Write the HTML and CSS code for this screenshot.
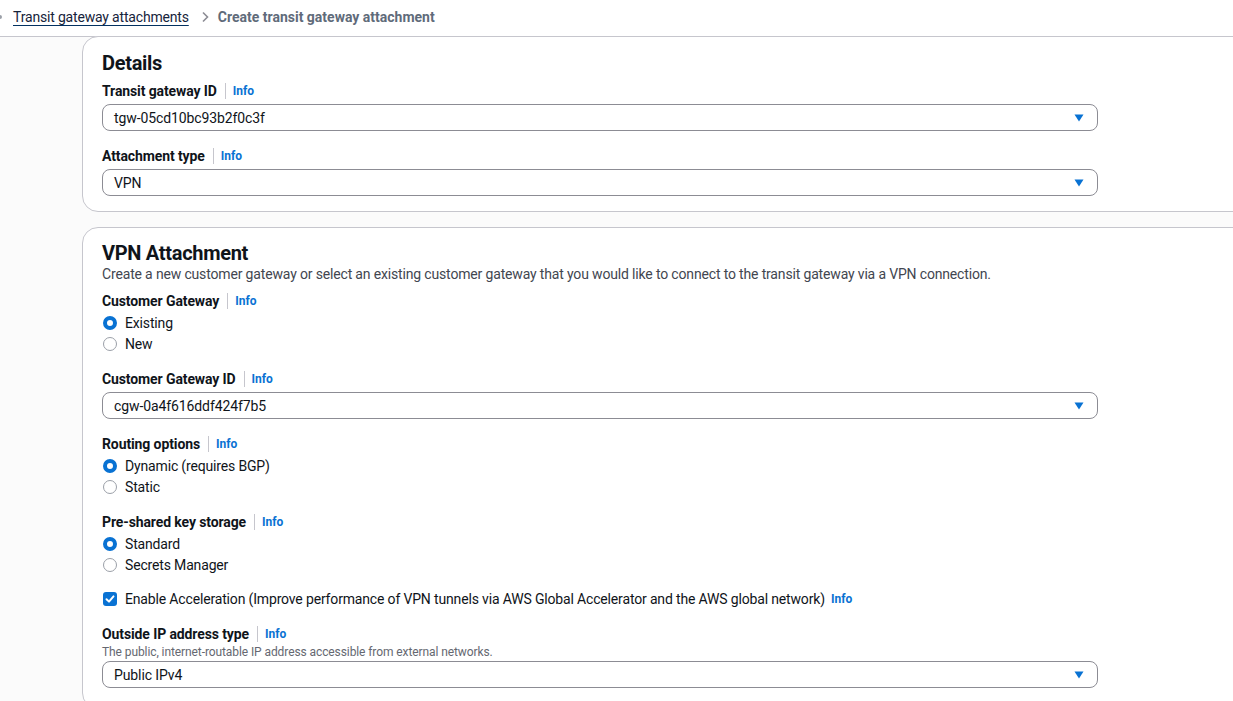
FILE: index.html
```html
<!DOCTYPE html>
<html>
<head>
<meta charset="utf-8">
<link rel="stylesheet" href="styles.css">
</head>
<body>
<div class="topbar">
  <nav class="crumbs">
    <span class="dot"></span>
    <a class="crumb-link" href="#">Transit gateway attachments</a>
    <svg class="chev" width="10" height="12" viewBox="0 0 10 12"><path d="M3 1.5 L7.5 6 L3 10.5" fill="none" stroke="#8c8c94" stroke-width="1.6"/></svg>
    <span class="crumb-current">Create transit gateway attachment</span>
  </nav>
</div>
<main class="content">
  <section class="card card-details">
    <h2 class="card-title">Details</h2>
    <div class="field field-top">
      <div class="label-row"><span class="label">Transit gateway ID</span><span class="sep"></span><a class="info" href="#">Info</a></div>
      <div class="select"><span>tgw-05cd10bc93b2f0c3f</span><svg class="caret" width="10" height="8" viewBox="0 0 10 8"><path d="M0.5 0.5 H9.5 L5 7.5 Z" fill="#0972d3"/></svg></div>
    </div>
    <div class="field">
      <div class="label-row"><span class="label">Attachment type</span><span class="sep"></span><a class="info" href="#">Info</a></div>
      <div class="select"><span>VPN</span><svg class="caret" width="10" height="8" viewBox="0 0 10 8"><path d="M0.5 0.5 H9.5 L5 7.5 Z" fill="#0972d3"/></svg></div>
    </div>
  </section>

  <section class="card card-vpn">
    <h2 class="card-title">VPN Attachment</h2>
    <p class="card-desc">Create a new customer gateway or select an existing customer gateway that you would like to connect to the transit gateway via a VPN connection.</p>

    <div class="field field-after-desc">
      <div class="label-row"><span class="label">Customer Gateway</span><span class="sep"></span><a class="info" href="#">Info</a></div>
      <div class="radios">
        <div class="radio-row"><span class="radio checked"></span><span>Existing</span></div>
        <div class="radio-row"><span class="radio"></span><span>New</span></div>
      </div>
    </div>

    <div class="field">
      <div class="label-row"><span class="label">Customer Gateway ID</span><span class="sep"></span><a class="info" href="#">Info</a></div>
      <div class="select"><span>cgw-0a4f616ddf424f7b5</span><svg class="caret" width="10" height="8" viewBox="0 0 10 8"><path d="M0.5 0.5 H9.5 L5 7.5 Z" fill="#0972d3"/></svg></div>
    </div>

    <div class="field">
      <div class="label-row"><span class="label">Routing options</span><span class="sep"></span><a class="info" href="#">Info</a></div>
      <div class="radios">
        <div class="radio-row"><span class="radio checked"></span><span>Dynamic (requires BGP)</span></div>
        <div class="radio-row"><span class="radio"></span><span>Static</span></div>
      </div>
    </div>

    <div class="field">
      <div class="label-row"><span class="label">Pre-shared key storage</span><span class="sep"></span><a class="info" href="#">Info</a></div>
      <div class="radios">
        <div class="radio-row"><span class="radio checked"></span><span>Standard</span></div>
        <div class="radio-row"><span class="radio"></span><span>Secrets Manager</span></div>
      </div>
    </div>

    <div class="field field-check">
      <div class="check-row">
        <span class="checkbox"><svg width="14" height="14" viewBox="0 0 14 14"><path d="M3.5 7.2 L6 9.6 L10.5 4.4" fill="none" stroke="#fff" stroke-width="2" stroke-linecap="round" stroke-linejoin="round"/></svg></span>
        <span class="reg">Enable Acceleration (Improve performance of VPN tunnels via AWS Global Accelerator and the AWS global network)</span>
        <a class="info info-inline" href="#">Info</a>
      </div>
    </div>

    <div class="field">
      <div class="label-row"><span class="label">Outside IP address type</span><span class="sep"></span><a class="info" href="#">Info</a></div>
      <div class="hint">The public, internet-routable IP address accessible from external networks.</div>
      <div class="select select-tight"><span>Public IPv4</span><svg class="caret" width="10" height="8" viewBox="0 0 10 8"><path d="M0.5 0.5 H9.5 L5 7.5 Z" fill="#0972d3"/></svg></div>
    </div>
  </section>
</main>
</body>
</html>
```

FILE: styles.css
```css
* { box-sizing: border-box; }
html, body { margin: 0; padding: 0; }
body {
  width: 1233px;
  height: 701px;
  overflow: hidden;
  background: #fbfbfb;
  font-family: Roboto, "Liberation Sans", sans-serif;
  font-size: 14px;
  color: #0f141a;
}
.topbar {
  height: 37px;
  background: #fff;
  border-bottom: 1px solid #c6c6cd;
}
.crumbs {
  display: flex;
  align-items: center;
  height: 34px;
  white-space: nowrap;
}
.dot {
  width: 4px;
  height: 4px;
  border-radius: 50%;
  background: #9ba0a8;
  margin-left: -2px;
  margin-right: 11px;
}
.crumb-link {
  color: #16233b;
  letter-spacing: -0.18px;
  text-decoration: underline;
  text-decoration-color: #033160;
  text-underline-offset: 3px;
}
.chev { margin: 0 8px 0 11px; }
.crumb-current {
  color: #5f6b7a;
  font-weight: 700;
}
.content {
  padding-left: 82px;
  margin-top: -1px;
}
.card {
  width: 1200px;
  background: #fff;
  border: 1px solid #c6c6cd;
  border-radius: 16px;
  padding: 14px 20px 15px 19px;
}
.card-vpn { margin-top: 15px; padding-top: 13px; padding-bottom: 20px; }
.card-title {
  margin: 0;
  font-size: 20px;
  line-height: 24px;
  font-weight: 700;
  letter-spacing: -0.3px;
}
.card-desc {
  margin: 0;
  line-height: 18px;
  color: #424650;
  letter-spacing: -0.16px;
}
.field { margin-top: 15px; }
.field-top { margin-top: 6px; }
.field-after-desc { margin-top: 8px; }
.field-check { margin-top: 14px; }
.label-row {
  display: flex;
  align-items: center;
  height: 20px;
}
.label { font-weight: 700; letter-spacing: -0.11px; }
.sep {
  width: 1px;
  height: 16px;
  background: #c6c6cd;
  margin: 0 7px 0 8px;
}
.info {
  color: #0972d3;
  font-weight: 700;
  font-size: 12px;
  text-decoration: none;
}
.info-inline { margin-left: 6px; }
.select {
  margin-top: 3px;
  width: 996px;
  height: 27px;
  border: 1px solid #8c8c94;
  border-radius: 8px;
  display: flex;
  align-items: center;
  justify-content: space-between;
  padding: 0 13px 0 11px;
  letter-spacing: -0.1px;
}
.select-tight { margin-top: 1px; }
.radios { margin-top: 1px; }
.radio-row {
  display: flex;
  align-items: center;
  height: 21px;
  gap: 8px;
  letter-spacing: -0.16px;
}
.radio {
  width: 14px;
  height: 14px;
  border-radius: 50%;
  border: 1.5px solid #9ba0a8;
  margin-left: 1px;
  background: #fff;
}
.radio.checked {
  border: 4px solid #0972d3;
}
.check-row {
  display: flex;
  align-items: center;
  height: 20px;
  white-space: nowrap;
}
.reg { letter-spacing: -0.16px; }
.checkbox {
  width: 14px;
  height: 14px;
  border-radius: 3px;
  background: #0972d3;
  margin: 0 8px 0 1px;
  display: flex;
}
.hint {
  font-size: 12px;
  line-height: 16px;
  color: #656871;
  letter-spacing: -0.09px;
}
```
